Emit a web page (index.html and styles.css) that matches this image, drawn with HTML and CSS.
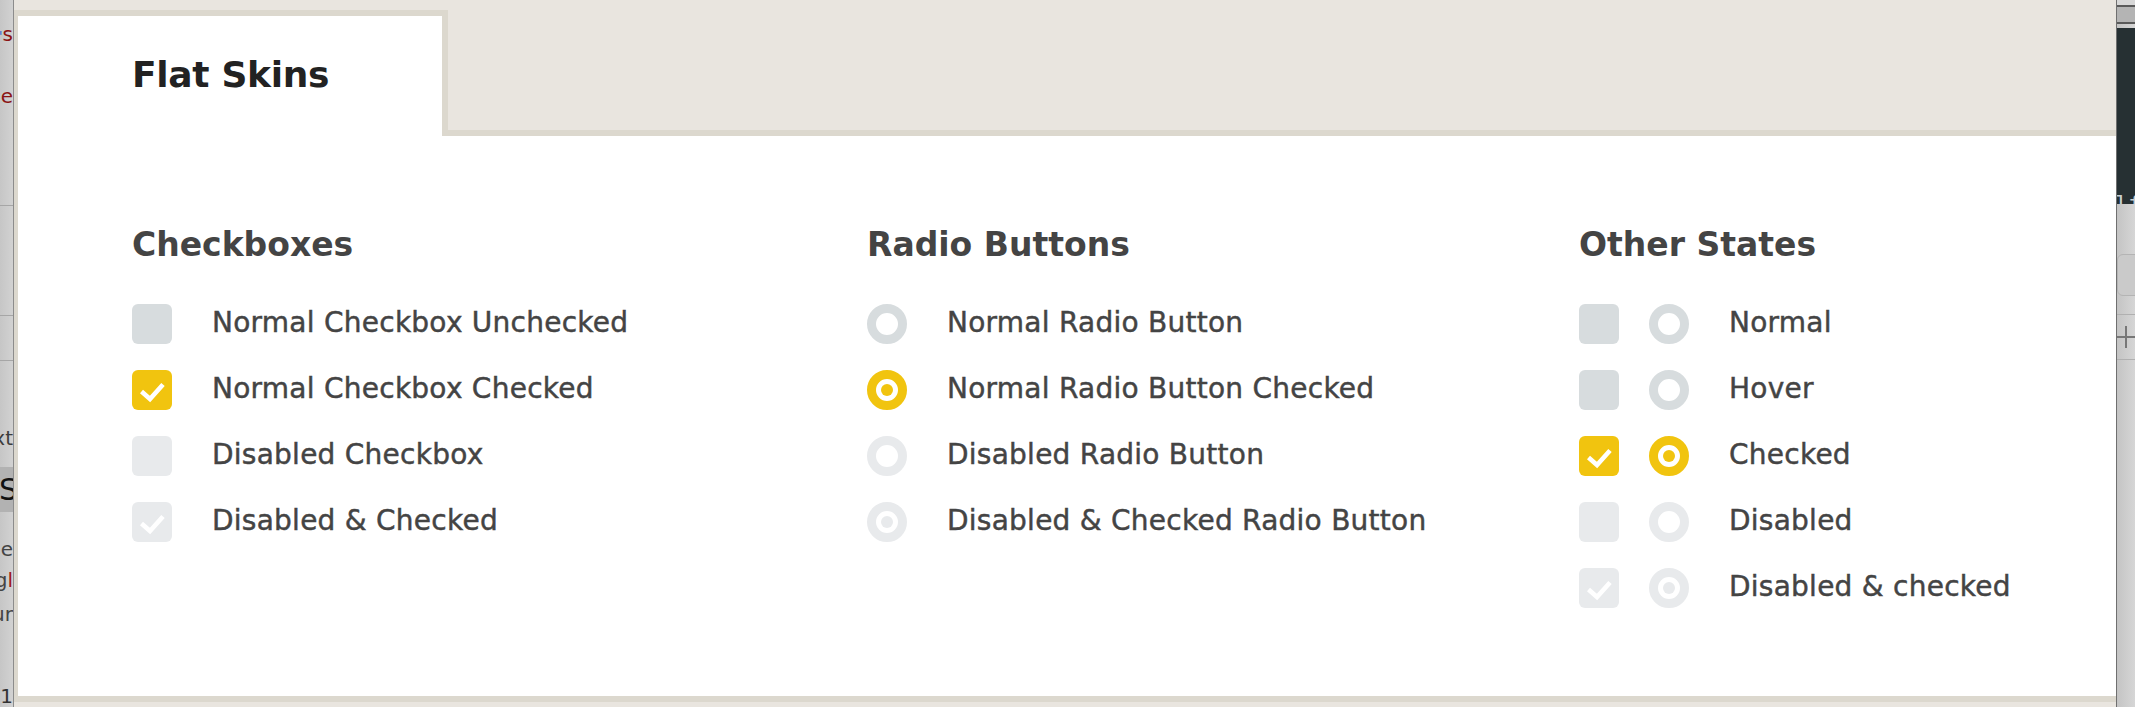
FILE: index.html
```html
<!DOCTYPE html>
<html lang="en">
<head>
<meta charset="utf-8">
<title>Flat Skins</title>
<link rel="stylesheet" href="styles.css">
</head>
<body>
<div class="page">
  <aside class="side-left">
    <div class="frag frag-s"><span class="blue">'</span>s</div>
    <div class="frag frag-e">e</div>
    <div class="hline l1"></div>
    <div class="hline l2"></div>
    <div class="hline l3"></div>
    <div class="frag frag-xt">xt</div>
    <div class="frag frag-S">S</div>
    <div class="frag frag-ie">ie</div>
    <div class="frag frag-g">g<span class="red">l</span></div>
    <div class="frag frag-ur">ur</div>
    <div class="frag frag-1">1</div>
  </aside>

  <main class="main">
    <div class="tabs">
      <div class="tab active"><h1 class="tab-title">Flat Skins</h1></div>
    </div>
    <section class="panel">
      <div class="columns">
        <div class="col col-check">
          <h2 class="col-title">Checkboxes</h2>
          <ul class="list">
            <li class="row"><span class="cb"></span><span class="label">Normal Checkbox Unchecked</span></li>
            <li class="row"><span class="cb checked"><svg viewBox="0 0 40 40"><polyline points="9.5,21.5 18,29 31,14.5"/></svg></span><span class="label">Normal Checkbox Checked</span></li>
            <li class="row"><span class="cb disabled"></span><span class="label">Disabled Checkbox</span></li>
            <li class="row"><span class="cb disabled"><svg viewBox="0 0 40 40"><polyline points="9.5,21.5 18,29 31,14.5"/></svg></span><span class="label">Disabled &amp; Checked</span></li>
          </ul>
        </div>
        <div class="col col-radio">
          <h2 class="col-title">Radio Buttons</h2>
          <ul class="list">
            <li class="row"><span class="rd"></span><span class="label">Normal Radio Button</span></li>
            <li class="row"><span class="rd checked"></span><span class="label">Normal Radio Button Checked</span></li>
            <li class="row"><span class="rd disabled"></span><span class="label">Disabled Radio Button</span></li>
            <li class="row"><span class="rd disabled checked"></span><span class="label">Disabled &amp; Checked Radio Button</span></li>
          </ul>
        </div>
        <div class="col col-other">
          <h2 class="col-title">Other States</h2>
          <ul class="list">
            <li class="row"><span class="pair"><span class="cb"></span><span class="rd"></span></span><span class="label">Normal</span></li>
            <li class="row"><span class="pair"><span class="cb"></span><span class="rd"></span></span><span class="label">Hover</span></li>
            <li class="row"><span class="pair"><span class="cb checked"><svg viewBox="0 0 40 40"><polyline points="9.5,21.5 18,29 31,14.5"/></svg></span><span class="rd checked"></span></span><span class="label">Checked</span></li>
            <li class="row"><span class="pair"><span class="cb disabled"></span><span class="rd disabled"></span></span><span class="label">Disabled</span></li>
            <li class="row"><span class="pair"><span class="cb disabled"><svg viewBox="0 0 40 40"><polyline points="9.5,21.5 18,29 31,14.5"/></svg></span><span class="rd disabled checked"></span></span><span class="label">Disabled &amp; checked</span></li>
          </ul>
        </div>
      </div>
    </section>
  </main>

  <aside class="side-right">
    <div class="r-top"></div>
    <div class="r-bar"></div>
    <div class="r-dark"><span class="r-glyph">lf</span></div>
    <div class="r-box"></div>
    <div class="r-plus"><span class="plus-h"></span><span class="plus-v"></span></div>
  </aside>
</div>
</body>
</html>
```

FILE: styles.css
```css
* { box-sizing: border-box; }

html, body {
  margin: 0;
  padding: 0;
  height: 707px;
  overflow: hidden;
  background: #e9e5df;
}

.page {
  display: flex;
  height: 707px;
  font-family: "DejaVu Sans", "Liberation Sans", sans-serif;
}

/* ---- left window fragment ---- */
.side-left {
  width: 14px;
  flex: 0 0 14px;
  background: linear-gradient(to right, #c6c6c6, #d2d2d2);
  border-right: 1px solid #8c8c8c;
  position: relative;
  overflow: hidden;
  font-family: "DejaVu Sans", sans-serif;
}
.frag {
  position: absolute;
  right: 0;
  font-size: 20px;
  line-height: 20px;
  color: #333;
  white-space: nowrap;
}
.frag-s { top: 24px; color: #8b1414; }
.frag-s .blue { color: #3b6fd6; font-size: 14px; }
.frag-e { top: 86px; color: #8b1414; }
.frag-xt { top: 428px; color: #3c3c3c; }
.frag-S { top: 467px; height: 45px; width: 14px; background: #b2b2b2; font-size: 30px; line-height: 45px; color: #111; text-align: right; }
.frag-ie { top: 539px; color: #444; }
.frag-g { top: 570px; color: #444; }
.frag-g .red { color: #a01818; }
.frag-ur { top: 604px; color: #444; }
.frag-1 { top: 686px; color: #333; }
.hline { position: absolute; left: 0; right: 0; height: 1px; background: #a6a6a6; }
.l1 { top: 205px; }
.l2 { top: 315px; }
.l3 { top: 360px; }

/* ---- main area ---- */
.main {
  flex: 1 1 auto;
  display: flex;
  flex-direction: column;
  background: #e9e5df;
  min-width: 0;
}

.tabs {
  display: flex;
  padding-top: 10px;
}

.tab {
  position: relative;
  z-index: 1;
  width: 434px;
  height: 126px;
  margin-bottom: -6px;
  background: #fff;
  border-top: 6px solid #dcd8ce;
  border-left: 4px solid #dcd8ce;
  border-right: 6px solid #dcd8ce;
  padding: 37px 0 0 114px;
}

.tab-title {
  margin: 0;
  font-size: 36px;
  line-height: 44px;
  font-weight: bold;
  color: #222;
  letter-spacing: -0.3px;
}

.panel {
  height: 572px;
  background: #fff;
  border-top: 6px solid #dcd8ce;
  border-left: 4px solid #dcd8ce;
  border-bottom: 6px solid #dcd8ce;
  padding: 89px 0 0 114px;
}

.columns {
  display: grid;
  grid-template-columns: 735px 712px 1fr;
}

.col-title {
  margin: 0;
  font-size: 33px;
  line-height: 40px;
  font-weight: bold;
  color: #444;
}

.list {
  list-style: none;
  margin: 39px 0 0;
  padding: 0;
  display: flex;
  flex-direction: column;
  gap: 26px;
}

.row {
  display: flex;
  align-items: center;
  height: 40px;
  gap: 40px;
}

.pair {
  display: flex;
  gap: 30px;
}

.label {
  font-size: 28px;
  line-height: 36px;
  letter-spacing: 0.25px;
  color: #444;
  -webkit-text-stroke: 0.45px #444;
  margin-bottom: 2px;
  white-space: nowrap;
}

/* checkbox */
.cb {
  width: 40px;
  height: 40px;
  flex: 0 0 40px;
  border-radius: 6px;
  background: #d7dcde;
  display: flex;
}
.cb.checked { background: #f1c40f; }
.cb.disabled { background: #e8eaec; }
.cb svg {
  width: 40px;
  height: 40px;
}
.cb svg polyline {
  fill: none;
  stroke: #fff;
  stroke-width: 4.6;
  stroke-linecap: butt;
  stroke-linejoin: miter;
}

/* radio */
.rd {
  width: 40px;
  height: 40px;
  flex: 0 0 40px;
  border-radius: 50%;
  border: 9px solid #d7dcde;
  background: #fff;
  display: flex;
  align-items: center;
  justify-content: center;
}
.rd.checked { border-color: #f1c40f; }
.rd.checked::after {
  content: "";
  width: 12px;
  height: 12px;
  border-radius: 50%;
  background: #f1c40f;
}
.rd.disabled { border-color: #e8eaec; }
.rd.disabled.checked::after { background: #e8eaec; }

/* ---- right window fragment ---- */
.side-right {
  width: 19px;
  flex: 0 0 19px;
  border-left: 1px solid #6f6f6f;
  background: linear-gradient(to right, #c4c4c4, #d6d6d6);
  display: flex;
  flex-direction: column;
  overflow: hidden;
}
.r-top {
  height: 7px;
  background: #d8d8d8;
  border-bottom: 2px solid #5a5a5a;
}
.r-bar {
  height: 17px;
  background: #b4b4b4;
  border-bottom: 2px solid #5a5a5a;
}
.r-dark {
  height: 176px;
  margin-top: 4px;
  background: #263033;
  color: #c8cfd2;
  font-family: "DejaVu Sans Mono", monospace;
  font-size: 22px;
  line-height: 22px;
  padding-top: 165px;
  white-space: nowrap;
  overflow: hidden;
}
.r-glyph { display: block; margin-left: -2px; }
.r-box {
  height: 42px;
  margin: 50px -6px 0 0;
  border: 1px solid #b4b4b4;
  border-radius: 6px;
  background: #cacaca;
}
.r-plus {
  position: relative;
  height: 46px;
  margin-top: 18px;
  border-top: 1px solid #b0b0b0;
  border-bottom: 1px solid #b0b0b0;
}
.plus-h { position: absolute; left: 0; width: 19px; top: 21px; height: 2px; background: #777; }
.plus-v { position: absolute; left: 8px; width: 2px; top: 11px; height: 22px; background: #777; }
```
